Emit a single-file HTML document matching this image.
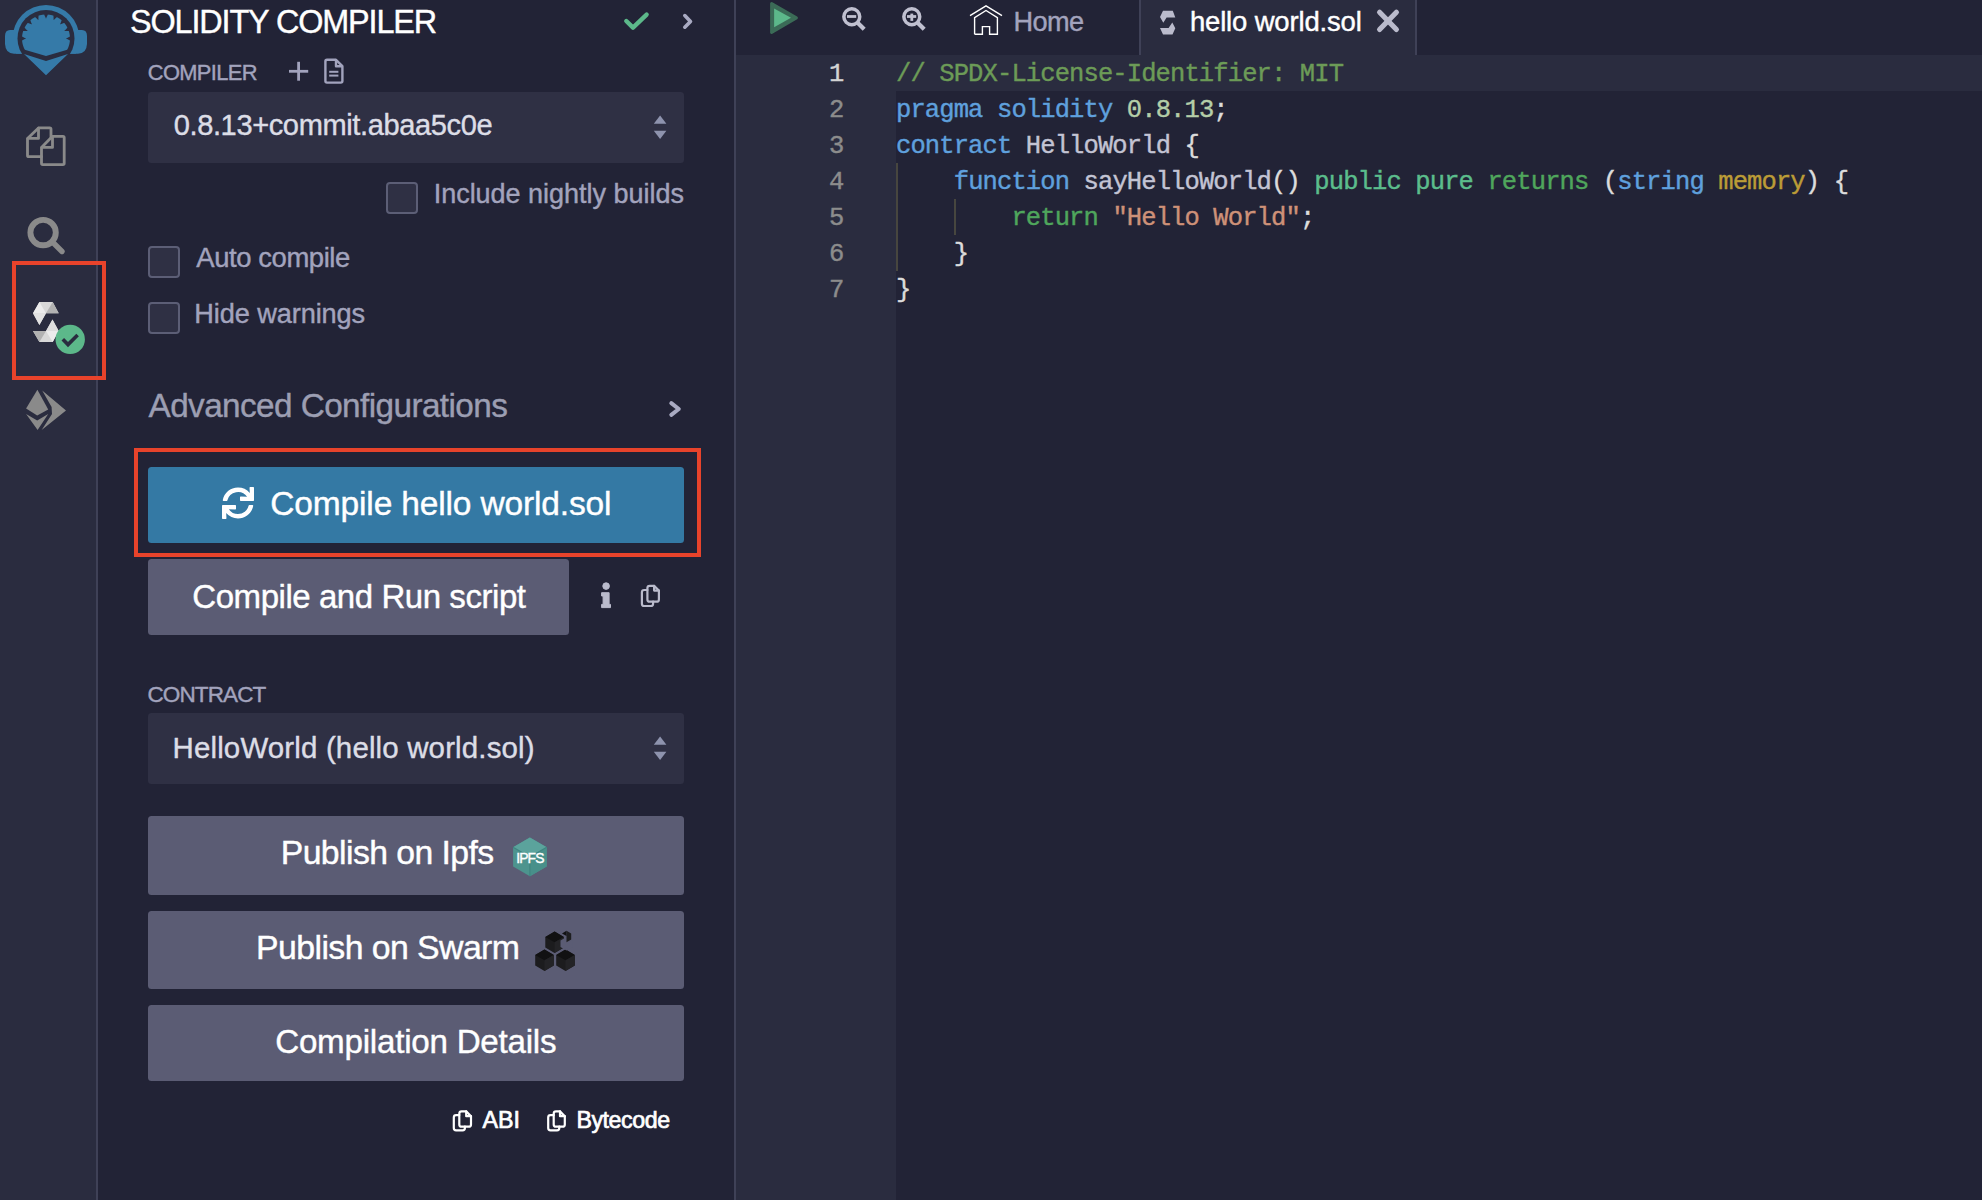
<!DOCTYPE html>
<html><head><meta charset="utf-8"><style>
html,body{margin:0;padding:0;width:1982px;height:1200px;overflow:hidden;background:#222336;font-family:"Liberation Sans",sans-serif}
.t{position:absolute;white-space:nowrap;line-height:1;font-family:"Liberation Sans",sans-serif;-webkit-text-stroke:0.4px currentColor}
.c{position:absolute;white-space:pre;font-family:"Liberation Mono",monospace;font-size:25.5px;letter-spacing:-0.88px;line-height:36px;-webkit-text-stroke:0.4px currentColor}
svg{position:absolute;left:0;top:0;overflow:visible}
</style></head><body>
<div style="position:absolute;left:0px;top:0px;width:96px;height:1200px;background:#2a2c3f"></div>
<div style="position:absolute;left:96px;top:0px;width:2px;height:1200px;background:#3f4157"></div>
<div style="position:absolute;left:98px;top:0px;width:636px;height:1200px;background:#222336"></div>
<div style="position:absolute;left:734px;top:0px;width:2px;height:1200px;background:#3f4157"></div>
<div style="position:absolute;left:736px;top:0px;width:1246px;height:55px;background:#222336"></div>
<div style="position:absolute;left:1139px;top:0px;width:2px;height:55px;background:#3f4157"></div>
<div style="position:absolute;left:1141px;top:0px;width:274px;height:55px;background:#2a2c3f"></div>
<div style="position:absolute;left:1415px;top:0px;width:2px;height:55px;background:#3f4157"></div>
<div style="position:absolute;left:736px;top:55px;width:160px;height:1145px;background:#2a2c3f"></div>
<div style="position:absolute;left:896px;top:55px;width:1086px;height:1145px;background:#222336"></div>
<div style="position:absolute;left:896px;top:55px;width:1086px;height:36px;background:#2a2c3f"></div>
<div style="position:absolute;left:148px;top:92px;width:536px;height:71px;background:#2f3044;border-radius:3.5px"></div>
<div style="position:absolute;left:148px;top:713px;width:536px;height:71px;background:#2f3044;border-radius:3.5px"></div>
<div style="position:absolute;left:386px;top:182px;width:32px;height:32px;background:#2f3044;border:2px solid #5c5e76;border-radius:4px;box-sizing:border-box"></div>
<div style="position:absolute;left:148px;top:246px;width:32px;height:32px;background:#2f3044;border:2px solid #5c5e76;border-radius:4px;box-sizing:border-box"></div>
<div style="position:absolute;left:148px;top:302px;width:32px;height:32px;background:#2f3044;border:2px solid #5c5e76;border-radius:4px;box-sizing:border-box"></div>
<div style="position:absolute;left:148px;top:467px;width:536px;height:76px;background:#3479a4;border-radius:3.5px"></div>
<div style="position:absolute;left:148px;top:559px;width:421px;height:76px;background:#5b5c74;border-radius:3.5px"></div>
<div style="position:absolute;left:148px;top:816px;width:536px;height:79px;background:#5b5c74;border-radius:3.5px"></div>
<div style="position:absolute;left:148px;top:911px;width:536px;height:78px;background:#5b5c74;border-radius:3.5px"></div>
<div style="position:absolute;left:148px;top:1005px;width:536px;height:75.5px;background:#5b5c74;border-radius:3.5px"></div>
<div style="position:absolute;left:12px;top:261px;width:94px;height:119px;border:4.3px solid #e8432b;box-sizing:border-box"></div>
<div style="position:absolute;left:134px;top:448px;width:567px;height:109px;border:4.3px solid #e8432b;box-sizing:border-box"></div>
<div class="c" style="left:896px;top:56.5px"><span style="color:#6c9b57">// SPDX-License-Identifier: MIT</span></div>
<div class="c" style="left:896px;top:92.5px"><span style="color:#5fa0dd">pragma</span><span style="color:#dcdcdc"> </span><span style="color:#5fa0dd">solidity</span><span style="color:#dcdcdc"> </span><span style="color:#b5cea8">0.8.13</span><span style="color:#dcdcdc">;</span></div>
<div class="c" style="left:896px;top:128.5px"><span style="color:#5fa0dd">contract</span><span style="color:#dcdcdc"> </span><span style="color:#c3c4d4">HelloWorld</span><span style="color:#dcdcdc"> {</span></div>
<div class="c" style="left:896px;top:164.5px"><span style="color:#dcdcdc">    </span><span style="color:#5fa0dd">function</span><span style="color:#dcdcdc"> </span><span style="color:#c3c4d4">sayHelloWorld</span><span style="color:#dcdcdc">() </span><span style="color:#5bbd8c">public</span><span style="color:#dcdcdc"> </span><span style="color:#5bbd8c">pure</span><span style="color:#dcdcdc"> </span><span style="color:#4fa65c">returns</span><span style="color:#dcdcdc"> (</span><span style="color:#5fa0dd">string</span><span style="color:#dcdcdc"> </span><span style="color:#bb9c36">memory</span><span style="color:#dcdcdc">) {</span></div>
<div class="c" style="left:896px;top:200.5px"><span style="color:#dcdcdc">        </span><span style="color:#4fa65c">return</span><span style="color:#dcdcdc"> </span><span style="color:#ce9178">&quot;Hello World&quot;</span><span style="color:#dcdcdc">;</span></div>
<div class="c" style="left:896px;top:236.5px"><span style="color:#dcdcdc">    }</span></div>
<div class="c" style="left:896px;top:272.5px"><span style="color:#dcdcdc">}</span></div>
<div class="c" style="left:829px;top:56.5px;color:#d4d4d4">1</div>
<div class="c" style="left:829px;top:92.5px;color:#8c8c8c">2</div>
<div class="c" style="left:829px;top:128.5px;color:#8c8c8c">3</div>
<div class="c" style="left:829px;top:164.5px;color:#8c8c8c">4</div>
<div class="c" style="left:829px;top:200.5px;color:#8c8c8c">5</div>
<div class="c" style="left:829px;top:236.5px;color:#8c8c8c">6</div>
<div class="c" style="left:829px;top:272.5px;color:#8c8c8c">7</div>
<div style="position:absolute;left:896.3px;top:163px;width:1.7px;height:108px;background:#47463f"></div>
<div style="position:absolute;left:954.2px;top:199px;width:1.7px;height:36px;background:#47463f"></div>
<div class="t" style="left:130.00px;top:5.68px;font-size:32.39px;letter-spacing:-1.115px;color:#ffffff;font-weight:400;">SOLIDITY COMPILER</div>
<div class="t" style="left:147.80px;top:62.20px;font-size:21.85px;letter-spacing:-0.631px;color:#a2a3bd;font-weight:400;">COMPILER</div>
<div class="t" style="left:173.70px;top:111.41px;font-size:29.05px;letter-spacing:-0.383px;color:#dcdde6;font-weight:400;">0.8.13+commit.abaa5c0e</div>
<div class="t" style="left:433.70px;top:180.52px;font-size:27.03px;letter-spacing:-0.028px;color:#a2a3bd;font-weight:400;">Include nightly builds</div>
<div class="t" style="left:196.30px;top:244.14px;font-size:27.48px;letter-spacing:-0.438px;color:#a2a3bd;font-weight:400;">Auto compile</div>
<div class="t" style="left:194.30px;top:299.99px;font-size:27.18px;letter-spacing:-0.107px;color:#a2a3bd;font-weight:400;">Hide warnings</div>
<div class="t" style="left:148.50px;top:389.09px;font-size:33.32px;letter-spacing:-0.585px;color:#9c9eb2;font-weight:400;">Advanced Configurations</div>
<div class="t" style="left:270.30px;top:486.83px;font-size:33.51px;letter-spacing:-0.151px;color:#ffffff;font-weight:400;">Compile hello world.sol</div>
<div class="t" style="left:192.30px;top:579.77px;font-size:33.0px;letter-spacing:-0.444px;color:#ffffff;font-weight:400;">Compile and Run script</div>
<div class="t" style="left:147.50px;top:683.63px;font-size:22.53px;letter-spacing:-0.904px;color:#a2a3bd;font-weight:400;">CONTRACT</div>
<div class="t" style="left:172.50px;top:732.98px;font-size:29.44px;letter-spacing:0.162px;color:#dcdde6;font-weight:400;">HelloWorld (hello world.sol)</div>
<div class="t" style="left:280.70px;top:836.42px;font-size:33.76px;letter-spacing:-0.572px;color:#ffffff;font-weight:400;">Publish on Ipfs</div>
<div class="t" style="left:256.00px;top:930.95px;font-size:33.85px;letter-spacing:-0.576px;color:#ffffff;font-weight:400;">Publish on Swarm</div>
<div class="t" style="left:275.20px;top:1024.61px;font-size:33.18px;letter-spacing:-0.243px;color:#ffffff;font-weight:400;">Compilation Details</div>
<div class="t" style="left:482.50px;top:1109.31px;font-size:23.26px;letter-spacing:0.042px;color:#ffffff;font-weight:400;-webkit-text-stroke:0.7px #ffffff">ABI</div>
<div class="t" style="left:576.40px;top:1109.36px;font-size:23.2px;letter-spacing:-0.426px;color:#ffffff;font-weight:400;-webkit-text-stroke:0.7px #ffffff">Bytecode</div>
<div class="t" style="left:1013.50px;top:8.31px;font-size:27.16px;letter-spacing:-0.645px;color:#a2a3bd;font-weight:400;">Home</div>
<div class="t" style="left:1189.90px;top:7.75px;font-size:27.47px;letter-spacing:-0.154px;color:#ffffff;font-weight:400;">hello world.sol</div>
<svg width="1982" height="1200" viewBox="0 0 1982 1200">
<defs><clipPath id="cb"><rect x="0" y="0" width="97" height="53.7"/></clipPath><clipPath id="cv"><polygon points="0,0 92,0 92,42.6 46,56 0,42.6"/></clipPath></defs>
<g fill="#357aa8">
<circle cx="46" cy="38.5" r="33.5" clip-path="url(#cb)"/>
<path d="M14,30 L10,30 Q5,30 5,36 L5,44 Q5.5,53.7 14,53.7 L24,53.7 L24,30 Z"/>
<path d="M78,30 L82,30 Q87,30 87,36 L87,44 Q86.5,53.7 78,53.7 L68,53.7 L68,30 Z"/>
</g>
<circle cx="46" cy="38.5" r="28.5" fill="#2a2c3f"/>
<polygon points="65.80,38.50 66.27,38.32 66.73,38.14 67.19,37.95 67.65,37.74 68.11,37.53 68.57,37.32 69.02,37.09 69.48,36.86 69.93,36.62 69.91,36.41 69.89,36.20 69.87,35.99 69.85,35.78 69.82,35.58 69.79,35.37 69.77,35.16 69.74,34.95 69.70,34.75 69.67,34.54 69.64,34.33 69.60,34.13 69.56,33.92 69.52,33.72 69.48,33.51 69.43,33.31 69.38,33.10 69.34,32.90 69.29,32.69 69.24,32.49 69.18,32.29 69.13,32.09 69.07,31.88 69.01,31.68 68.95,31.48 68.89,31.28 68.83,31.08 68.32,31.03 67.81,30.99 67.30,30.96 66.80,30.93 66.29,30.91 65.79,30.90 65.29,30.90 64.79,30.91 64.29,30.92 64.66,30.58 65.01,30.23 65.37,29.88 65.72,29.51 66.06,29.15 66.40,28.77 66.73,28.39 67.06,28.00 67.38,27.60 67.29,27.42 67.19,27.23 67.09,27.05 66.99,26.86 66.89,26.68 66.78,26.50 66.68,26.32 66.57,26.14 66.46,25.96 66.35,25.78 66.24,25.60 66.13,25.43 66.01,25.25 65.90,25.08 65.78,24.91 65.66,24.73 65.54,24.56 65.42,24.39 65.29,24.22 65.17,24.06 65.04,23.89 64.91,23.72 64.78,23.56 64.65,23.40 64.52,23.23 64.39,23.07 64.25,22.91 63.76,23.06 63.28,23.22 62.80,23.38 62.32,23.55 61.85,23.72 61.38,23.91 60.91,24.10 60.46,24.29 60.00,24.50 60.21,24.04 60.40,23.59 60.59,23.12 60.78,22.65 60.95,22.18 61.12,21.70 61.28,21.22 61.44,20.74 61.59,20.25 61.43,20.11 61.27,19.98 61.10,19.85 60.94,19.72 60.78,19.59 60.61,19.46 60.44,19.33 60.28,19.21 60.11,19.08 59.94,18.96 59.77,18.84 59.59,18.72 59.42,18.60 59.25,18.49 59.07,18.37 58.90,18.26 58.72,18.15 58.54,18.04 58.36,17.93 58.18,17.82 58.00,17.72 57.82,17.61 57.64,17.51 57.45,17.41 57.27,17.31 57.08,17.21 56.90,17.12 56.50,17.44 56.11,17.77 55.73,18.10 55.35,18.44 54.99,18.78 54.62,19.13 54.27,19.49 53.92,19.84 53.58,20.21 53.59,19.71 53.60,19.21 53.60,18.71 53.59,18.21 53.57,17.70 53.54,17.20 53.51,16.69 53.47,16.18 53.42,15.67 53.22,15.61 53.02,15.55 52.82,15.49 52.62,15.43 52.41,15.37 52.21,15.32 52.01,15.26 51.81,15.21 51.60,15.16 51.40,15.12 51.19,15.07 50.99,15.02 50.78,14.98 50.58,14.94 50.37,14.90 50.17,14.86 49.96,14.83 49.75,14.80 49.55,14.76 49.34,14.73 49.13,14.71 48.92,14.68 48.72,14.65 48.51,14.63 48.30,14.61 48.09,14.59 47.88,14.57 47.64,15.02 47.41,15.48 47.18,15.93 46.97,16.39 46.76,16.85 46.55,17.31 46.36,17.77 46.18,18.23 46.00,18.70 45.82,18.23 45.64,17.77 45.45,17.31 45.24,16.85 45.03,16.39 44.82,15.93 44.59,15.48 44.36,15.02 44.12,14.57 43.91,14.59 43.70,14.61 43.49,14.63 43.28,14.65 43.08,14.68 42.87,14.71 42.66,14.73 42.45,14.76 42.25,14.80 42.04,14.83 41.83,14.86 41.63,14.90 41.42,14.94 41.22,14.98 41.01,15.02 40.81,15.07 40.60,15.12 40.40,15.16 40.19,15.21 39.99,15.26 39.79,15.32 39.59,15.37 39.38,15.43 39.18,15.49 38.98,15.55 38.78,15.61 38.58,15.67 38.53,16.18 38.49,16.69 38.46,17.20 38.43,17.70 38.41,18.21 38.40,18.71 38.40,19.21 38.41,19.71 38.42,20.21 38.08,19.84 37.73,19.49 37.38,19.13 37.01,18.78 36.65,18.44 36.27,18.10 35.89,17.77 35.50,17.44 35.10,17.12 34.92,17.21 34.73,17.31 34.55,17.41 34.36,17.51 34.18,17.61 34.00,17.72 33.82,17.82 33.64,17.93 33.46,18.04 33.28,18.15 33.10,18.26 32.93,18.37 32.75,18.49 32.58,18.60 32.41,18.72 32.23,18.84 32.06,18.96 31.89,19.08 31.72,19.21 31.56,19.33 31.39,19.46 31.22,19.59 31.06,19.72 30.90,19.85 30.73,19.98 30.57,20.11 30.41,20.25 30.56,20.74 30.72,21.22 30.88,21.70 31.05,22.18 31.22,22.65 31.41,23.12 31.60,23.59 31.79,24.04 32.00,24.50 31.54,24.29 31.09,24.10 30.62,23.91 30.15,23.72 29.68,23.55 29.20,23.38 28.72,23.22 28.24,23.06 27.75,22.91 27.61,23.07 27.48,23.23 27.35,23.40 27.22,23.56 27.09,23.72 26.96,23.89 26.83,24.06 26.71,24.22 26.58,24.39 26.46,24.56 26.34,24.73 26.22,24.91 26.10,25.08 25.99,25.25 25.87,25.43 25.76,25.60 25.65,25.78 25.54,25.96 25.43,26.14 25.32,26.32 25.22,26.50 25.11,26.68 25.01,26.86 24.91,27.05 24.81,27.23 24.71,27.42 24.62,27.60 24.94,28.00 25.27,28.39 25.60,28.77 25.94,29.15 26.28,29.51 26.63,29.88 26.99,30.23 27.34,30.58 27.71,30.92 27.21,30.91 26.71,30.90 26.21,30.90 25.71,30.91 25.20,30.93 24.70,30.96 24.19,30.99 23.68,31.03 23.17,31.08 23.11,31.28 23.05,31.48 22.99,31.68 22.93,31.88 22.87,32.09 22.82,32.29 22.76,32.49 22.71,32.69 22.66,32.90 22.62,33.10 22.57,33.31 22.52,33.51 22.48,33.72 22.44,33.92 22.40,34.13 22.36,34.33 22.33,34.54 22.30,34.75 22.26,34.95 22.23,35.16 22.21,35.37 22.18,35.58 22.15,35.78 22.13,35.99 22.11,36.20 22.09,36.41 22.07,36.62 22.52,36.86 22.98,37.09 23.43,37.32 23.89,37.53 24.35,37.74 24.81,37.95 25.27,38.14 25.73,38.32 26.20,38.50 25.73,38.68 25.27,38.86 24.81,39.05 24.35,39.26 23.89,39.47 23.43,39.68 22.98,39.91 22.52,40.14 22.07,40.38 22.09,40.59 22.11,40.80 22.13,41.01 22.15,41.22 22.18,41.42 22.21,41.63 22.23,41.84 22.26,42.05 22.30,42.25 22.33,42.46 22.36,42.67 22.40,42.87 22.44,43.08 22.48,43.28 22.52,43.49 22.57,43.69 22.62,43.90 22.66,44.10 22.71,44.31 22.76,44.51 22.82,44.71 22.87,44.91 22.93,45.12 22.99,45.32 23.05,45.52 23.11,45.72 23.17,45.92 23.24,46.12 23.31,46.31 23.38,46.51 23.45,46.71 23.52,46.90 23.59,47.10 23.67,47.30 23.75,47.49 23.83,47.68 23.91,47.88 23.99,48.07 24.07,48.26 24.16,48.45 24.25,48.64 24.34,48.83 24.43,49.02 24.52,49.21 24.62,49.40 24.71,49.58 24.81,49.77 24.91,49.95 25.01,50.14 25.11,50.32 25.22,50.50 25.32,50.68 25.43,50.86 25.54,51.04 25.65,51.22 25.76,51.40 25.87,51.57 25.99,51.75 26.10,51.92 26.22,52.09 26.34,52.27 26.46,52.44 26.58,52.61 26.71,52.78 26.83,52.94 26.96,53.11 27.09,53.28 27.22,53.44 27.35,53.60 27.48,53.77 27.61,53.93 27.75,54.09 27.89,54.25 28.03,54.40 28.16,54.56 28.31,54.71 28.45,54.87 28.59,55.02 28.74,55.17 28.88,55.32 29.03,55.47 29.18,55.62 29.33,55.76 29.48,55.91 29.63,56.05 29.79,56.19 29.94,56.34 30.10,56.47 30.25,56.61 30.41,56.75 30.57,56.89 30.73,57.02 30.90,57.15 31.06,57.28 31.22,57.41 31.39,57.54 31.56,57.67 31.72,57.79 31.89,57.92 32.06,58.04 32.23,58.16 32.41,58.28 32.58,58.40 32.75,58.51 32.93,58.63 33.10,58.74 33.28,58.85 33.46,58.96 33.64,59.07 33.82,59.18 34.00,59.28 34.18,59.39 34.36,59.49 34.55,59.59 34.73,59.69 34.92,59.79 35.10,59.88 35.29,59.98 35.48,60.07 35.67,60.16 35.86,60.25 36.05,60.34 36.24,60.43 36.43,60.51 36.62,60.59 36.82,60.67 37.01,60.75 37.20,60.83 37.40,60.91 37.60,60.98 37.79,61.05 37.99,61.12 38.19,61.19 38.38,61.26 38.58,61.33 38.78,61.39 38.98,61.45 39.18,61.51 39.38,61.57 39.59,61.63 39.79,61.68 39.99,61.74 40.19,61.79 40.40,61.84 40.60,61.88 40.81,61.93 41.01,61.98 41.22,62.02 41.42,62.06 41.63,62.10 41.83,62.14 42.04,62.17 42.25,62.20 42.45,62.24 42.66,62.27 42.87,62.29 43.08,62.32 43.28,62.35 43.49,62.37 43.70,62.39 43.91,62.41 44.12,62.43 44.33,62.44 44.53,62.46 44.74,62.47 44.95,62.48 45.16,62.49 45.37,62.49 45.58,62.50 45.79,62.50 46.00,62.50 46.21,62.50 46.42,62.50 46.63,62.49 46.84,62.49 47.05,62.48 47.26,62.47 47.47,62.46 47.67,62.44 47.88,62.43 48.09,62.41 48.30,62.39 48.51,62.37 48.72,62.35 48.92,62.32 49.13,62.29 49.34,62.27 49.55,62.24 49.75,62.20 49.96,62.17 50.17,62.14 50.37,62.10 50.58,62.06 50.78,62.02 50.99,61.98 51.19,61.93 51.40,61.88 51.60,61.84 51.81,61.79 52.01,61.74 52.21,61.68 52.41,61.63 52.62,61.57 52.82,61.51 53.02,61.45 53.22,61.39 53.42,61.33 53.62,61.26 53.81,61.19 54.01,61.12 54.21,61.05 54.40,60.98 54.60,60.91 54.80,60.83 54.99,60.75 55.18,60.67 55.38,60.59 55.57,60.51 55.76,60.43 55.95,60.34 56.14,60.25 56.33,60.16 56.52,60.07 56.71,59.98 56.90,59.88 57.08,59.79 57.27,59.69 57.45,59.59 57.64,59.49 57.82,59.39 58.00,59.28 58.18,59.18 58.36,59.07 58.54,58.96 58.72,58.85 58.90,58.74 59.07,58.63 59.25,58.51 59.42,58.40 59.59,58.28 59.77,58.16 59.94,58.04 60.11,57.92 60.28,57.79 60.44,57.67 60.61,57.54 60.78,57.41 60.94,57.28 61.10,57.15 61.27,57.02 61.43,56.89 61.59,56.75 61.75,56.61 61.90,56.47 62.06,56.34 62.21,56.19 62.37,56.05 62.52,55.91 62.67,55.76 62.82,55.62 62.97,55.47 63.12,55.32 63.26,55.17 63.41,55.02 63.55,54.87 63.69,54.71 63.84,54.56 63.97,54.40 64.11,54.25 64.25,54.09 64.39,53.93 64.52,53.77 64.65,53.60 64.78,53.44 64.91,53.28 65.04,53.11 65.17,52.94 65.29,52.78 65.42,52.61 65.54,52.44 65.66,52.27 65.78,52.09 65.90,51.92 66.01,51.75 66.13,51.57 66.24,51.40 66.35,51.22 66.46,51.04 66.57,50.86 66.68,50.68 66.78,50.50 66.89,50.32 66.99,50.14 67.09,49.95 67.19,49.77 67.29,49.58 67.38,49.40 67.48,49.21 67.57,49.02 67.66,48.83 67.75,48.64 67.84,48.45 67.93,48.26 68.01,48.07 68.09,47.88 68.17,47.68 68.25,47.49 68.33,47.30 68.41,47.10 68.48,46.90 68.55,46.71 68.62,46.51 68.69,46.31 68.76,46.12 68.83,45.92 68.89,45.72 68.95,45.52 69.01,45.32 69.07,45.12 69.13,44.91 69.18,44.71 69.24,44.51 69.29,44.31 69.34,44.10 69.38,43.90 69.43,43.69 69.48,43.49 69.52,43.28 69.56,43.08 69.60,42.87 69.64,42.67 69.67,42.46 69.70,42.25 69.74,42.05 69.77,41.84 69.79,41.63 69.82,41.42 69.85,41.22 69.87,41.01 69.89,40.80 69.91,40.59 69.93,40.38 69.48,40.14 69.02,39.91 68.57,39.68 68.11,39.47 67.65,39.26 67.19,39.05 66.73,38.86 66.27,38.68" fill="#357aa8" clip-path="url(#cv)"/>
<polygon points="24,54 46,61 68,54 46,75.3" fill="#357aa8"/>
<g fill="none" stroke="#8a8a8a" stroke-width="2.8" stroke-linejoin="round" stroke-linecap="round">
<path d="M51,137.6 L51,129.2 Q51,127.9 49.7,127.9 L38.5,127.9 L27.5,138.4 L27.5,155.4 Q27.5,156.7 28.8,156.7 L41.5,156.7"/>
<path d="M38.5,128.2 L38.5,138.4 L28,138.4"/>
<path d="M52.5,136.3 L62.9,136.3 Q64.2,136.3 64.2,137.6 L64.2,163.3 Q64.2,164.6 62.9,164.6 L42.8,164.6 Q41.5,164.6 41.5,163.3 L41.5,147.4 Z"/>
<path d="M52.5,136.6 L52.5,147.4 L42,147.4"/>
</g>
<circle cx="43.1" cy="232.6" r="12.7" fill="none" stroke="#8a8a8a" stroke-width="5.9"/>
<line x1="52" y1="241.5" x2="62" y2="251.5" stroke="#8a8a8a" stroke-width="5.4" stroke-linecap="round"/>
<polygon points="39.4,302 52.7,302 58.7,313.3 46,313.3 39.4,324.9 33,313.3" fill="#d8d8d8"/>
<polygon points="39.4,302 46,313.3 33,313.3" fill="#ececec"/>
<polygon points="52.7,302 58.7,313.3 46,313.3" fill="#b2b2b2"/>
<polygon points="46,313.3 39.4,324.9 33,313.3" fill="#e2e2e2"/>
<polygon points="52.5,319.4 58.7,331 52.7,342 39.4,342 33,331 46,331" fill="#d8d8d8"/>
<polygon points="33,331 46,331 39.4,342" fill="#b2b2b2"/>
<polygon points="52.5,319.4 58.7,331 46,331" fill="#dedede"/>
<polygon points="58.7,331 52.7,342 46,331" fill="#ececec"/>
<circle cx="70.2" cy="339.4" r="14.7" fill="#5cb88a"/>
<polyline points="62.8,339.3 68,344.6 77.6,335" fill="none" stroke="#2a2c3f" stroke-width="3.6"/>
<g fill="#8a8a8a">
<polygon points="37.4,389.7 48.2,409.4 37.2,415.6 26.1,408.5"/>
<polygon points="26.1,414 37.2,420.5 48.2,414 37.6,430"/>
<polygon points="42.2,390.6 66,410.4 41.7,430 52,414 51.6,407"/>
</g>
<polyline points="626.3,21 633,27.6 646.6,14.6" fill="none" stroke="#5cb88a" stroke-width="4.4" stroke-linecap="round" stroke-linejoin="round"/>
<polyline points="684.8,15.6 690.5,21.4 684.8,27.2" fill="none" stroke="#a9aac2" stroke-width="3.6" stroke-linecap="round" stroke-linejoin="round"/>
<g stroke="#a2a3bd" stroke-width="2.8"><line x1="289" y1="71.3" x2="308.2" y2="71.3"/><line x1="298.6" y1="61.8" x2="298.6" y2="80.7"/></g>
<g fill="none" stroke="#a2a3bd" stroke-width="2.4" stroke-linejoin="round"><path d="M336,59.8 L327,59.8 Q325.4,59.8 325.4,61.4 L325.4,81 Q325.4,82.6 327,82.6 L340.8,82.6 Q342.4,82.6 342.4,81 L342.4,66.2 Z"/><path d="M336,60 L336,66.2 L342.2,66.2" /></g>
<g stroke="#a2a3bd" stroke-width="2"><line x1="329.2" y1="71.8" x2="338.4" y2="71.8"/><line x1="329.2" y1="75.6" x2="338.4" y2="75.6"/></g>
<polygon points="653.8,123.8 660.1,115.4 666.4,123.8" fill="#8e93ae"/>
<polygon points="653.8,130.8 660.1,139 666.4,130.8" fill="#8e93ae"/>
<polygon points="653.8,744.8 660.1,736.4 666.4,744.8" fill="#8e93ae"/>
<polygon points="653.8,751.8 660.1,760 666.4,751.8" fill="#8e93ae"/>
<polyline points="671.3,403.2 678.8,409 671.3,414.8" fill="none" stroke="#a9aac2" stroke-width="4" stroke-linecap="round" stroke-linejoin="round"/>
<path transform="translate(222,487) scale(0.0625)" fill="#ffffff" d="M440.65 12.57l4 82.77A247.16 247.16 0 0 0 255.83 8C134.73 8 33.91 94.92 12.29 209.82A12 12 0 0 0 24.09 224h49.05a12 12 0 0 0 11.67-9.26 175.91 175.91 0 0 1 317-56.94l-101.46-4.86a12 12 0 0 0-12.57 12v47.41a12 12 0 0 0 12 12H500a12 12 0 0 0 12-12V12a12 12 0 0 0-12-12h-47.37a12 12 0 0 0-11.98 12.57zM255.83 432a175.61 175.61 0 0 1-146-77.8l101.8 4.87a12 12 0 0 0 12.57-12v-47.4a12 12 0 0 0-12-12H12a12 12 0 0 0-12 12V500a12 12 0 0 0 12 12h47.35a12 12 0 0 0 12-12.6l-4.15-82.57A247.17 247.17 0 0 0 255.83 504c121.11 0 221.93-86.92 243.55-201.82a12 12 0 0 0-11.8-14.18h-49.05a12 12 0 0 0-11.67 9.26A175.86 175.86 0 0 1 255.83 432z"/>
<g fill="#babbcc" stroke="#babbcc" stroke-width="1" stroke-linejoin="round"><circle cx="606.1" cy="586.1" r="3.3"/><path d="M601.6,592.7 L609.1,592.7 L609.1,604.4 L610.5,604.4 L610.5,607.6 L601.6,607.6 L601.6,604.4 L603.1,604.4 L603.1,596 L601.6,596 Z"/></g>
<g fill="none" stroke="#babbcc" stroke-width="2.2" stroke-linejoin="round" stroke-linecap="round"><path d="M647.4,588.1 Q647.4,585.8000000000001 649.6999999999999,585.8000000000001 L654.1,585.8000000000001 L658.9,590.6 L658.9,599.4 Q658.9,601.6999999999999 656.6,601.6999999999999 L649.6999999999999,601.6999999999999 Q647.4,601.6999999999999 647.4,599.4 Z"/><path d="M654.1,585.8000000000001 L654.1,590.6 L658.9,590.6"/><path d="M647.4,590.0 L644.1999999999999,590.0 Q641.9,590.0 641.9,592.3 L641.9,603.7 Q641.9,606.0 644.1999999999999,606.0 L650.8000000000001,606.0 Q653.1,606.0 653.1,603.7 L653.1,601.6999999999999"/></g>
<g fill="none" stroke="#ffffff" stroke-width="2.2" stroke-linejoin="round" stroke-linecap="round"><path d="M459.3,1113.6999999999998 Q459.3,1111.3999999999999 461.6,1111.3999999999999 L466.2,1111.3999999999999 L471.0,1116.1999999999998 L471.0,1124.4 Q471.0,1126.7 468.7,1126.7 L461.6,1126.7 Q459.3,1126.7 459.3,1124.4 Z"/><path d="M466.2,1111.3999999999999 L466.2,1116.1999999999998 L471.0,1116.1999999999998"/><path d="M459.3,1115.1 L456.1,1115.1 Q453.8,1115.1 453.8,1117.3999999999999 L453.8,1128.1000000000001 Q453.8,1130.4 456.1,1130.4 L462.59999999999997,1130.4 Q464.9,1130.4 464.9,1128.1000000000001 L464.9,1126.7"/></g>
<g fill="none" stroke="#ffffff" stroke-width="2.2" stroke-linejoin="round" stroke-linecap="round"><path d="M553.7,1113.6999999999998 Q553.7,1111.3999999999999 556.0,1111.3999999999999 L560.0,1111.3999999999999 L564.8,1116.1999999999998 L564.8,1124.4 Q564.8,1126.7 562.5,1126.7 L556.0,1126.7 Q553.7,1126.7 553.7,1124.4 Z"/><path d="M560.0,1111.3999999999999 L560.0,1116.1999999999998 L564.8,1116.1999999999998"/><path d="M553.7,1115.1 L550.5,1115.1 Q548.2,1115.1 548.2,1117.3999999999999 L548.2,1128.1000000000001 Q548.2,1130.4 550.5,1130.4 L557.0,1130.4 Q559.3,1130.4 559.3,1128.1000000000001 L559.3,1126.7"/></g>
<polygon points="529.9,837.5 546.7,847.2 546.7,866.6 529.9,876.3 513.1,866.6 513.1,847.2" fill="#4d948e"/>
<polygon points="513.1,847.2 529.9,837.5 546.7,847.2 529.9,856.9" fill="#5ba39c"/>
<polygon points="529.9,856.9 546.7,847.2 546.7,866.6 529.9,876.3" fill="#48908a"/>
<g stroke="#3f8580" stroke-width="1.2"><line x1="529.9" y1="856.9" x2="513.1" y2="847.2"/><line x1="529.9" y1="856.9" x2="546.7" y2="847.2"/><line x1="529.9" y1="856.9" x2="529.9" y2="876.3"/></g>
<text x="529.9" y="863.2" font-family="Liberation Sans" font-size="15" fill="#ffffff" stroke="#ffffff" stroke-width="0.4" text-anchor="middle" letter-spacing="-0.9" textLength="27.5" lengthAdjust="spacingAndGlyphs">IPFS</text>
<polygon points="544.5,949.6 553.8,954.9 553.8,965.6 544.5,971.0 535.2,965.6 535.2,954.9" fill="#1c1c1e"/><polygon points="535.2,954.9 544.5,949.6 553.8,954.9 544.5,960.3" fill="#111112"/><polygon points="544.5,960.3 553.8,954.9 553.8,965.6 544.5,971.0" fill="#232326"/>
<polygon points="565.5,949.6 574.8,954.9 574.8,965.6 565.5,971.0 556.2,965.6 556.2,954.9" fill="#1c1c1e"/><polygon points="556.2,954.9 565.5,949.6 574.8,954.9 565.5,960.3" fill="#111112"/><polygon points="565.5,960.3 574.8,954.9 574.8,965.6 565.5,971.0" fill="#232326"/>
<polygon points="554.6,931.6 563.9,936.9 563.9,947.6 554.6,953.0 545.3,947.6 545.3,936.9" fill="#1c1c1e"/><polygon points="545.3,936.9 554.6,931.6 563.9,936.9 554.6,942.3" fill="#111112"/><polygon points="554.6,942.3 563.9,936.9 563.9,947.6 554.6,953.0" fill="#232326"/>
<polygon points="566.5,937 572.5,940.5 572.5,947 566.5,950.5 560.5,947 560.5,940.5" fill="#5b5c74"/>
<polygon points="566.5,930.8 571.2,933.6 571.2,939.6 566.5,942.3" fill="#1e1e20"/><polygon points="562,933.6 566.5,930.8 566.5,936 " fill="#111112"/>
<polygon points="771.6,3.6 796.4,17.9 771.6,32.4" fill="#3b6b57" stroke="#3b6b57" stroke-width="3" stroke-linejoin="round"/>
<polygon points="774.1,8.6 791,17.7 774.1,27.2" fill="#5cb88a"/>
<circle cx="851.8" cy="16.75" r="7.95" fill="none" stroke="#c0c0d0" stroke-width="3.5"/>
<line x1="857.4" y1="22.5" x2="864.1999999999999" y2="29.3" stroke="#c0c0d0" stroke-width="4.2"/>
<line x1="847.0" y1="16.5" x2="856.1999999999999" y2="16.5" stroke="#c0c0d0" stroke-width="2.8"/>
<circle cx="911.8" cy="16.75" r="7.95" fill="none" stroke="#c0c0d0" stroke-width="3.5"/>
<line x1="917.4" y1="22.5" x2="924.1999999999999" y2="29.3" stroke="#c0c0d0" stroke-width="4.2"/>
<line x1="907.0" y1="16.5" x2="916.1999999999999" y2="16.5" stroke="#c0c0d0" stroke-width="2.8"/>
<line x1="911.8" y1="13.6" x2="911.8" y2="20.9" stroke="#c0c0d0" stroke-width="2.8"/>
<g fill="none" stroke="#ffffff" stroke-width="1.4" stroke-linejoin="miter"><polyline points="970,15.6 986,5.8 1002,15.6"/><polyline points="974.6,34.2 974.6,17.6 986,10.5 997.4,17.6 997.4,34.2 989.6,34.2 989.6,26.6 982.4,26.6 982.4,34.2 974.6,34.2"/></g>
<g fill="#babbcc"><polygon points="1163,10.8 1172.8,10.8 1175.3,17.4 1166.6,17.4 1163.3,22.8 1160,17"/><polygon points="1172.3,22.4 1175.3,28.2 1172.5,34.4 1163,34.4 1160,28 1168.6,28"/></g>
<g stroke="#babbcc" stroke-width="5.2" stroke-linecap="round"><line x1="1379.6" y1="12.3" x2="1396.4" y2="29.5"/><line x1="1396.4" y1="12.3" x2="1379.6" y2="29.5"/></g>
</svg>
</body></html>
